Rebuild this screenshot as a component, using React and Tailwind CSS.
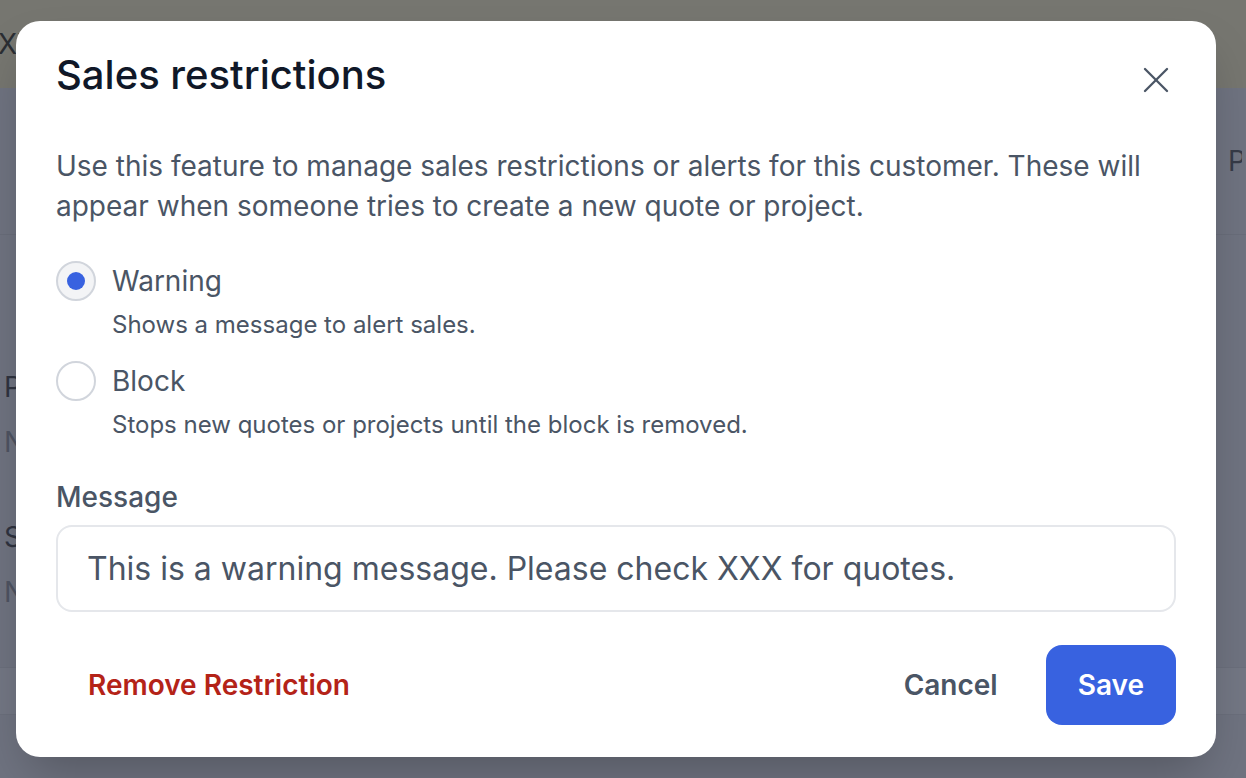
import { X } from "lucide-react";

const font = { fontFamily: "Inter, 'Noto Sans', sans-serif" };

const Radio = ({ checked, label, hint }) => (
  <div>
    <div className="flex items-center gap-4">
      {checked ? (
        <span className="flex h-10 w-10 items-center justify-center rounded-full border-2 border-gray-300 bg-gray-100">
          <span className="h-[18px] w-[18px] rounded-full bg-[#3862e0]"></span>
        </span>
      ) : (
        <span className="h-10 w-10 rounded-full border-2 border-gray-300 bg-white"></span>
      )}
      <span className="text-[28px] leading-[40px] text-gray-600">{label}</span>
    </div>
    <p className="mt-[8px] pl-14 text-[24px] leading-[32px] text-gray-600">{hint}</p>
  </div>
);

const App = () => {
  return (
    <div className="relative h-[778px] w-[1246px] overflow-hidden bg-[#6f7380]" style={font}>
      {/* page behind the dialog, already dimmed */}
      <div className="flex h-[88px] items-center bg-[#767670] text-[28px] text-[#2b2e33]">
        <span className="-ml-[2px]">XX</span>
      </div>
      <div className="flex h-[147px] items-center justify-end border-b border-[#696d7a] pr-[4px] text-[28px] text-[#363a47]">
        <span className="w-[14px] overflow-hidden">P</span>
      </div>
      <div className="pl-[4px] pt-[132px] text-[28px] leading-[40px]">
        <p className="text-[#2f3340]">P</p>
        <p className="mt-[15px] text-[#4f5462]">N</p>
        <p className="mt-[55px] text-[#2f3340]">S</p>
        <p className="mt-[15px] text-[#4f5462]">N</p>
      </div>
      <div className="mt-[55px] h-[48px] border-y border-[#6b6f7c] bg-[#737784]"></div>

      {/* dialog */}
      <div className="absolute inset-0 flex items-center">
        <div className="ml-[16px] w-[1200px] rounded-[24px] bg-white px-10 pb-8 pt-[30px] shadow-2xl">
          <div className="flex items-start justify-between">
            <h2 className="text-[40px] font-medium leading-[48px] text-gray-900">Sales restrictions</h2>
            <button className="-mr-[2px] mt-[7px] text-gray-600">
              <X size={44} strokeWidth={1.3} />
            </button>
          </div>
          <p className="mt-[44px] text-[28px] leading-[40px] text-gray-600">
            Use this feature to manage sales restrictions or alerts for this customer. These will appear when someone tries to create a new quote or project.
          </p>
          <div className="mt-[35px] flex flex-col gap-5">
            <Radio checked label="Warning" hint="Shows a message to alert sales." />
            <Radio label="Block" hint="Stops new quotes or projects until the block is removed." />
          </div>
          <label className="mt-[36px] block text-[28px] font-medium leading-[40px] text-gray-600">Message</label>
          <div className="mt-[8px] flex h-[87px] items-center rounded-2xl border-2 border-gray-200 px-[29px] text-[32px] text-gray-600">
            This is a warning message. Please check XXX for quotes.
          </div>
          <div className="mt-[33px] flex items-center justify-between">
            <button className="h-20 px-8 text-[28px] font-semibold text-[#b42318]">Remove Restriction</button>
            <div className="flex items-center gap-4">
              <button className="h-20 px-8 text-[28px] font-semibold text-gray-600">Cancel</button>
              <button className="h-20 rounded-2xl bg-[#3862e0] px-8 text-[28px] font-semibold text-white">Save</button>
            </div>
          </div>
        </div>
      </div>
    </div>
  );
};

export default App;
